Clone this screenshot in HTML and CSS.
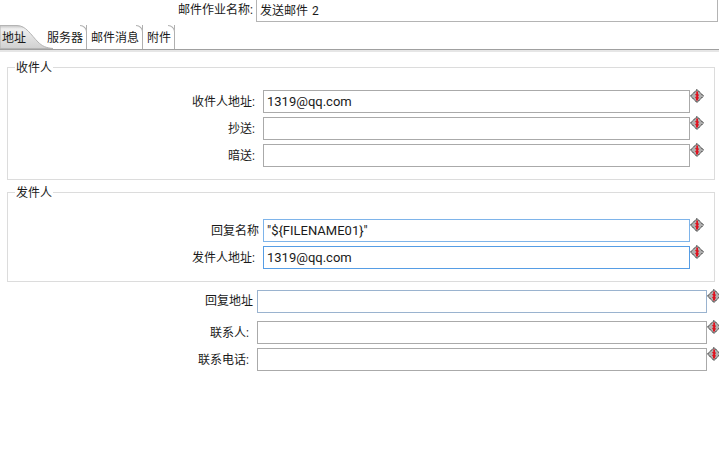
FILE: index.html
```html
<!DOCTYPE html>
<html lang="zh-CN">
<head>
  <meta charset="UTF-8">
  <title>发送邮件</title>
  <link rel="stylesheet" href="styles.css">
</head>
<body>

  <svg class="defs" width="0" height="0">
    <symbol id="var" viewBox="0 0 14 14">
      <path d="M7 .5 13.500 7 7 13.500 .5 7Z" fill="#b0b0b0" stroke="#222" stroke-dasharray="1.6 .5"/>
      <path d="M6 2.500H8V5L9 6 8 7.500 9 9 8 10V11.500H6V9.500L5 8.500 6.500 7 5 5.500 6.500 4.500Z" fill="#e0121f"/>
    </symbol>
    <linearGradient id="tabfill" x1="0" y1="0" x2="0" y2="1">
      <stop offset="0" stop-color="#c4c4c4"/>
      <stop offset=".15" stop-color="#efefef"/>
      <stop offset="1" stop-color="#d0d0d0"/>
    </linearGradient>
  </svg>

  <div class="row top-row">
    <label class="lbl">邮件作业名称:</label>
    <input class="txt" value="发送邮件 2">
  </div>

  <div class="tabs">
    <div class="tab active">
      <svg class="tab-bg" width="53" height="24"><path d="M0 .5H17C26 .5 31 10 38 17 42 21 46 23 53 23.500H0Z" fill="url(#tabfill)" stroke="#b4b4b4"/></svg>
      <span class="tab-text">地址</span>
    </div>
    <div class="tab t-server">服务器</div>
    <div class="tab t-msg">邮件消息</div>
    <div class="tab t-att">附件</div>
  </div>

  <fieldset class="box box-to">
    <legend>收件人</legend>
    <div class="row">
      <label class="lbl">收件人地址:</label>
      <input class="txt" value="1319@qq.com">
      <svg class="ico"><use href="#var"/></svg>
    </div>
    <div class="row">
      <label class="lbl">抄送:</label>
      <input class="txt">
      <svg class="ico"><use href="#var"/></svg>
    </div>
    <div class="row">
      <label class="lbl">暗送:</label>
      <input class="txt">
      <svg class="ico"><use href="#var"/></svg>
    </div>
  </fieldset>

  <fieldset class="box box-from">
    <legend>发件人</legend>
    <div class="row">
      <label class="lbl lbl-name">回复名称</label>
      <input class="txt blue" value="&quot;${FILENAME01}&quot;">
      <svg class="ico"><use href="#var"/></svg>
    </div>
    <div class="row">
      <label class="lbl">发件人地址:</label>
      <input class="txt focus" value="1319@qq.com">
      <svg class="ico"><use href="#var"/></svg>
    </div>
  </fieldset>

  <div class="bottom">
    <div class="row reply">
      <label class="lbl">回复地址</label>
      <input class="txt steel">
      <svg class="ico"><use href="#var"/></svg>
    </div>
    <div class="row contact">
      <label class="lbl">联系人:</label>
      <input class="txt">
      <svg class="ico"><use href="#var"/></svg>
    </div>
    <div class="row contact">
      <label class="lbl">联系电话:</label>
      <input class="txt">
      <svg class="ico"><use href="#var"/></svg>
    </div>
  </div>

</body>
</html>
```

FILE: styles.css
```css
body {
  margin: 0;
  background: #fff;
  color: #1a1a1a;
  font-family: "Roboto", "Noto Sans CJK SC", sans-serif;
  font-size: 12px;
  overflow: hidden;
}
.defs { display: block; }

.row {
  display: flex;
  align-items: flex-start;
  height: 23px;
  margin-bottom: 4px;
}
.lbl {
  flex: none;
  width: 250px;
  padding-top: 4px;
  line-height: 17px;
  text-align: right;
}
.txt {
  flex: none;
  box-sizing: border-box;
  width: 427px;
  height: 23px;
  margin-left: 7px;
  padding: 0 3px;
  border: 1px solid #aaa;
  font: 13px "Roboto", "Noto Sans CJK SC", sans-serif;
  color: #1a1a1a;
  outline: none;
}
.blue { border-color: #7eb4ea; }
.focus { border-color: #569de5; }
.steel { border-color: #9ab3cf; }
.ico { flex: none; width: 14px; height: 14px; margin-top: -1px; }

.top-row { margin: -1px 0 0; }
.top-row .lbl { width: 253px; padding-top: 3px; }
.top-row .txt {
  width: 462px;
  margin-left: 3px;
  padding: 0 3px 2px;
  border-color: #b4b4b4;
  font-size: 12px;
  word-spacing: 1px;
}

/* tabs */
.tabs {
  display: flex;
  height: 24px;
  margin-top: 3px;
  border-bottom: 1px solid #a0a0a0;
  box-shadow: 0 2px 0 #e6e6e6;
  line-height: 26px;
}
.tab {
  position: relative;
  box-sizing: border-box;
  height: 24px;
  border-right: 1px solid #b0b0b0;
}
.tab::after {
  content: "";
  position: absolute;
  top: 0;
  right: -1px;
  width: 6px;
  height: 7px;
  border-top: 1px solid #b0b0b0;
  border-right: 1px solid #b0b0b0;
  border-top-right-radius: 7px;
  background: #fff;
}
.active {
  width: 46px;
  padding-left: 2px;
  border-right: 0;
}
.active::after { display: none; }
.tab-bg { position: absolute; top: 0; left: 0; }
.tab-text { position: relative; }
.t-server { width: 41px; padding-left: 1px; }
.t-msg { width: 56px; padding-left: 4px; }
.t-att { width: 32px; padding-left: 4px; }

/* groups */
.box {
  box-sizing: border-box;
  width: 708px;
  margin: 0 0 0 7px;
  padding: 0;
  border: 1px solid #dcdcdc;
}
.box legend {
  margin-left: 7px;
  padding: 2px 1px 0;
  line-height: 17px;
}
.box .lbl { width: 247px; }
.box .txt { margin-left: 8px; }
.box .lbl-name { width: 251px; }
.box .lbl-name + .txt { margin-left: 4px; }
.box-to { height: 122px; margin-top: 8px; }
.box-to .row:first-of-type { margin-top: 13px; }
.box-from { height: 99px; margin-top: 3px; }
.box-from .row:first-of-type { margin-top: 17px; }

.bottom { margin-top: 8px; }
.bottom .lbl { width: 253px; }
.bottom .txt { width: 450px; margin-left: 4px; }
.bottom .contact .lbl { width: 249px; }
.bottom .contact .txt { margin-left: 8px; }
.reply { margin-bottom: 8px; }
.reply .lbl { padding-top: 3px; }
```
